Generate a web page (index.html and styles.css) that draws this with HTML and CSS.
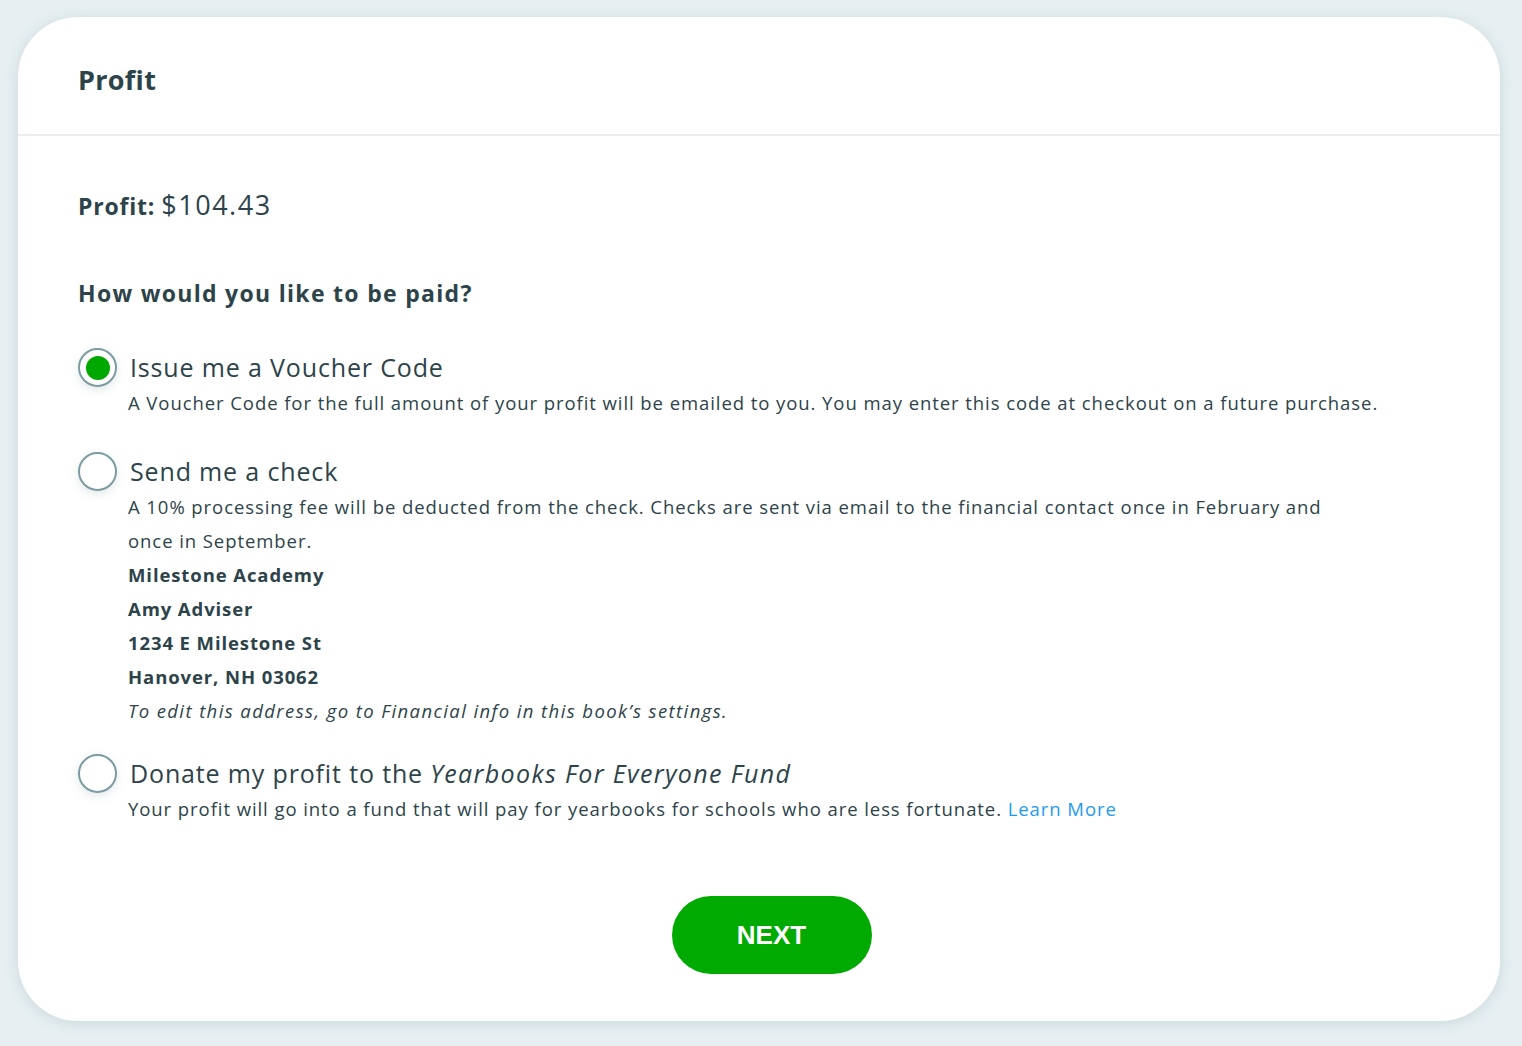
FILE: index.html
```html
<!DOCTYPE html>
<html>
<head>
<meta charset="utf-8">
<link rel="stylesheet" href="styles.css">
</head>
<body>
<div class="card">
  <div class="card-header"><h1 class="title">Profit</h1></div>
  <div class="card-body">
    <div class="profit-line"><span class="profit-label">Profit:</span> <span class="profit-value">$104.43</span></div>
    <h2 class="question">How would you like to be paid?</h2>
    <div class="options">
      <div class="option option-first">
        <span class="radio checked"><span class="dot"></span></span>
        <div class="option-text">
          <div class="option-label">Issue me a Voucher Code</div>
          <div class="option-desc">A Voucher Code for the full amount of your profit will be emailed to you. You may enter this code at checkout on a future purchase.</div>
        </div>
      </div>
      <div class="option option-second">
        <span class="radio"></span>
        <div class="option-text">
          <div class="option-label">Send me a check</div>
          <div class="option-desc desc-wrap">A 10% processing fee will be deducted from the check. Checks are sent via email to the financial contact once in February and once in September.</div>
          <div class="option-desc strong">Milestone Academy</div>
          <div class="option-desc strong">Amy Adviser</div>
          <div class="option-desc strong">1234 E Milestone St</div>
          <div class="option-desc strong">Hanover, NH 03062</div>
          <div class="option-desc note">To edit this address, go to Financial info in this book’s settings.</div>
        </div>
      </div>
      <div class="option">
        <span class="radio"></span>
        <div class="option-text">
          <div class="option-label">Donate my profit to the <em class="fund">Yearbooks For Everyone Fund</em></div>
          <div class="option-desc">Your profit will go into a fund that will pay for yearbooks for schools who are less fortunate. <a class="link" href="#">Learn More</a></div>
        </div>
      </div>
    </div>
    <div class="actions"><button class="next-btn">NEXT</button></div>
  </div>
</div>
</body>
</html>
```
FILE: styles.css
```css
html, body {
  margin: 0;
  padding: 0;
}
body {
  background: #e7eff2;
  font-family: "Open Sans", "Noto Sans", sans-serif;
  font-variant-ligatures: none;
  color: #2d434a;
  padding: 17px 22px 25px 18px;
}
.card {
  background: #fff;
  border-radius: 60px;
  box-shadow: 0 2px 14px rgba(120, 150, 160, 0.25);
  height: 1004px;
  box-sizing: border-box;
}
.card-header {
  height: 119px;
  box-sizing: border-box;
  border-bottom: 2px solid #ececec;
  padding: 46px 60px 0;
}
.title {
  margin: 0;
  font-size: 27px;
  line-height: 34px;
  font-weight: 700;
  letter-spacing: 0.3px;
}
.card-body {
  padding: 51px 60px 0;
}
.profit-line {
  line-height: 36px;
}
.profit-label {
  font-size: 23px;
  font-weight: 700;
  letter-spacing: 0.8px;
}
.profit-value {
  font-size: 27px;
  letter-spacing: 1.5px;
  margin-left: 2px;
}
.question {
  margin: 51px 0 0;
  font-size: 23px;
  line-height: 30px;
  font-weight: 700;
  letter-spacing: 1.3px;
}
.options {
  margin-top: 40px;
  display: flex;
  flex-direction: column;
}
.option {
  display: flex;
  align-items: flex-start;
}
.option-first { margin-bottom: 32px; }
.option-second { margin-bottom: 26px; }
.radio {
  flex: none;
  width: 35px;
  height: 35px;
  border: 2px solid #7c9ba3;
  border-radius: 50%;
  box-shadow: 0 3px 10px rgba(100, 130, 140, 0.18);
  display: flex;
  align-items: center;
  justify-content: center;
  margin-right: 13px;
  background: #fff;
}
.dot {
  width: 24px;
  height: 24px;
  border-radius: 50%;
  background: #00a800;
}
.option-label {
  font-size: 25px;
  line-height: 38px;
  letter-spacing: 0.85px;
}
.fund {
  letter-spacing: 1.35px;
}
.option-desc {
  font-size: 18.5px;
  line-height: 34px;
  letter-spacing: 0.93px;
  margin-left: -2px;
}
.desc-wrap {
  max-width: 1225px;
}
.strong {
  font-weight: 700;
  letter-spacing: 0.9px;
}
.note {
  font-style: italic;
  letter-spacing: 1.4px;
}
.link {
  color: #1e9bf0;
  text-decoration: none;
}
.actions {
  display: flex;
  justify-content: center;
  padding-left: 25px;
  margin-top: 70px;
}
.next-btn {
  width: 200px;
  height: 78px;
  border: none;
  border-radius: 39px;
  background: #00aa00;
  color: #fff;
  font-family: "Liberation Sans", Arial, sans-serif;
  font-weight: 700;
  font-size: 26px;
}
```
